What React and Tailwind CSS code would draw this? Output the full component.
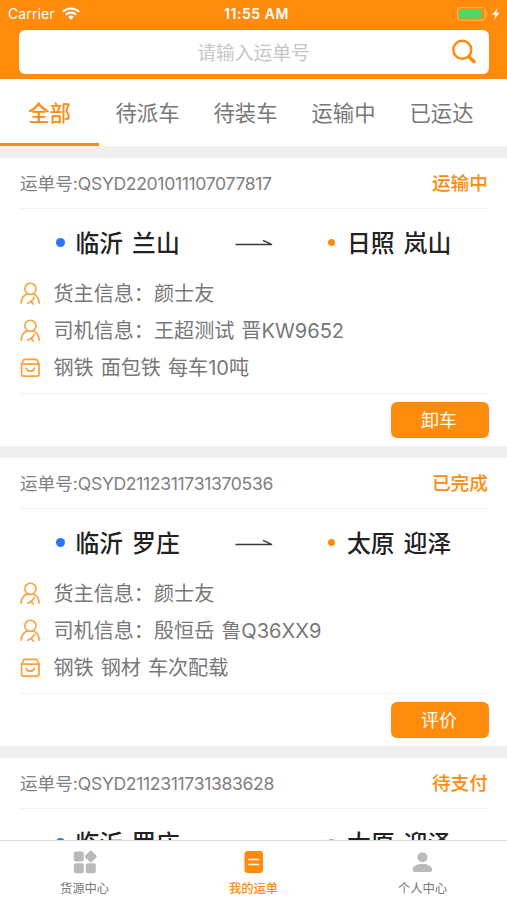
import React from "react";

const TABS = ["全部", "待派车", "待装车", "运输中", "已运达"];

const ORDERS = [
  {
    no: "QSYD2201011107077817",
    status: "运输中",
    from: ["临沂", "兰山"],
    to: ["日照", "岚山"],
    owner: "颜士友",
    driver: ["王超测试", "晋KW9652"],
    cargo: ["钢铁", "面包铁", "每车10吨"],
    action: "卸车",
  },
  {
    no: "QSYD2112311731370536",
    status: "已完成",
    from: ["临沂", "罗庄"],
    to: ["太原", "迎泽"],
    owner: "颜士友",
    driver: ["殷恒岳", "鲁Q36XX9"],
    cargo: ["钢铁", "钢材", "车次配载"],
    action: "评价",
  },
  {
    no: "QSYD2112311731383628",
    status: "待支付",
    from: ["临沂", "罗庄"],
    to: ["太原", "迎泽"],
  },
];

function WifiIcon() {
  return (
    <svg className="ml-[7px] h-[13px] w-[18px]" viewBox="0 0 18 13" fill="none" stroke="#fff" strokeWidth="2.2">
      <path d="M1 4.8a11.3 11.3 0 0 1 16 0" />
      <path d="M3.9 7.8a7.2 7.2 0 0 1 10.2 0" />
      <path d="M9 12.7L6.3 9.9a3.9 3.9 0 0 1 5.4 0z" fill="#fff" stroke="none" />
    </svg>
  );
}

function BatteryIcon() {
  return (
    <svg className="h-[14px] w-[44px]" viewBox="0 0 44 14" fill="none">
      <rect x="0.6" y="0.6" width="27.5" height="12.6" rx="3" stroke="#ffb765" strokeWidth="1" />
      <rect x="2" y="2.2" width="22.5" height="9.4" rx="1.2" fill="#4cd964" />
      <path d="M29.6 4.8c1.6.6 1.6 3.6 0 4.2z" fill="#ffb765" />
      <path d="M40.6 1L35.2 7.8h3.2L37 12.8l5.6-7h-3.3z" fill="#fff" />
    </svg>
  );
}

function SearchIcon() {
  return (
    <svg className="h-[26px] w-[26px]" viewBox="0 0 26 26" fill="none" stroke="#ff8b0d">
      <circle cx="11.3" cy="10.8" r="9" strokeWidth="2.5" />
      <path d="M18.2 18l4.8 4.6" strokeWidth="3.6" strokeLinecap="round" />
    </svg>
  );
}

function PersonIcon() {
  return (
    <svg className="h-[24px] w-[20px]" viewBox="0 0 20 24" fill="none" stroke="#ff9f3a" strokeWidth="1.6" strokeLinecap="round">
      <circle cx="10.4" cy="6.8" r="5.6" />
      <path d="M7.4 11.8C3.8 13.4 1.2 16.6 1.2 21.2" />
      <path d="M13.2 11.8c3.4 1.7 5.9 5 5.9 9.4" />
      <path d="M14.2 15.4c-1.2 2.8-3.6 5-6.6 5.8" />
      <path d="M11 19.2l2.5 3" />
    </svg>
  );
}

function CargoIcon() {
  return (
    <svg className="h-[20px] w-[20px]" viewBox="0 0 20 20" fill="none" stroke="#ff9f3a" strokeWidth="1.7" strokeLinecap="round" strokeLinejoin="round">
      <path d="M1.6 5.8L4 1.3h12.6L19 5.8v10.3a2 2 0 0 1-2 2H3.6a2 2 0 0 1-2-2z" />
      <path d="M1.6 6.2H19" />
      <path d="M6.2 10.2c1.1 4 7.1 4 8.2 0" />
    </svg>
  );
}

function RouteArrow() {
  return (
    <svg className="h-[8px] w-[38px]" viewBox="0 0 38 8" fill="none" stroke="#3a3a3a" strokeWidth="1.5">
      <path d="M0.5 5.6H37L28 1.4" strokeLinejoin="bevel" />
    </svg>
  );
}

function InfoRow({ icon, children }) {
  return (
    <div className="flex h-[37px] items-center text-[20.1px] text-[#777]">
      <span className="flex w-[33.5px] items-center">{icon}</span>
      <span className="flex pt-[2px]">{children}</span>
    </div>
  );
}

function Words({ items }) {
  return (
    <span className="flex gap-[7px]">
      {items.map((t) => (
        <span key={t}>{t}</span>
      ))}
    </span>
  );
}

function Place({ names, dot, className }) {
  return (
    <div className={`flex items-center ${className}`}>
      <span className={`rounded-full ${dot}`} />
      <span className="flex gap-[9px] pt-[2px] text-[23.8px] leading-normal font-medium text-[#222]">
        <span>{names[0]}</span>
        <span>{names[1]}</span>
      </span>
    </div>
  );
}

function OrderCard({ order }) {
  return (
    <article className="h-[288px] shrink-0 bg-white pr-[18px] pl-[20px]">
      <header className="flex h-[51px] items-center justify-between border-b border-[#f2f2f2] pt-[2px] pr-[1px]">
        <span className="text-[17.6px] text-[#808080]">
          运单号:<span className="tracking-[-0.35px]">{order.no}</span>
        </span>
        <span className="text-[18.7px] font-medium text-[#ff8b0d]">{order.status}</span>
      </header>
      <div className="flex h-[66px] items-center pt-px">
        <Place names={order.from} dot="ml-[36px] mr-[11px] size-[8.5px] bg-[#2e74fb]" className="w-[215px]" />
        <RouteArrow />
        <Place names={order.to} dot="mr-[12px] size-[7px] bg-[#ff8b0d]" className="ml-[55px]" />
      </div>
      {order.action && (
        <>
          <InfoRow icon={<PersonIcon />}>
            <span>货主信息：</span>
            <span>{order.owner}</span>
          </InfoRow>
          <InfoRow icon={<PersonIcon />}>
            <span>司机信息：</span>
            <Words items={order.driver} />
          </InfoRow>
          <InfoRow icon={<CargoIcon />}>
            <Words items={order.cargo} />
          </InfoRow>
          <footer className="mt-[7px] flex justify-end border-t border-[#f2f2f2] pt-[8px]">
            <button className="h-[36px] w-[98px] rounded-[6px] bg-[#ff8b0d] pt-[2px] pr-[2px] text-[18px] text-white">{order.action}</button>
          </footer>
        </>
      )}
    </article>
  );
}

function GridIcon() {
  return (
    <svg className="h-[24px] w-[24px]" viewBox="0 0 24 24" fill="#bababa">
      <rect x="0.8" y="1.6" width="10" height="10" rx="2" />
      <rect x="13.2" y="1.8" width="9.2" height="9.2" rx="1.4" transform="rotate(45 17.8 6.4)" />
      <rect x="0.8" y="13.2" width="10" height="10" rx="2" />
      <rect x="12.8" y="13.2" width="10" height="10" rx="2" />
    </svg>
  );
}

function WaybillIcon() {
  return (
    <svg className="h-[24px] w-[24px]" viewBox="0 0 24 24">
      <rect x="2.5" y="1" width="18.5" height="22" rx="3.2" fill="#ff8b0d" />
      <path d="M6.2 9.5h11M6.2 14.5h11" stroke="#fff" strokeWidth="1.5" />
    </svg>
  );
}

function ProfileIcon() {
  return (
    <svg className="h-[24px] w-[24px]" viewBox="0 0 24 24" fill="#bababa">
      <circle cx="11.4" cy="7.3" r="5" />
      <path d="M1.6 19.6c0-3.6 4.6-5.6 9.8-5.6s9.8 2 9.8 5.6c0 1.6-.8 2.4-2.2 2.4H3.8c-1.4 0-2.2-.8-2.2-2.4z" />
    </svg>
  );
}

const NAV = [
  { label: "货源中心", icon: <GridIcon />, color: "text-[#777]" },
  { label: "我的运单", icon: <WaybillIcon />, color: "text-[#ff8b0d] font-medium" },
  { label: "个人中心", icon: <ProfileIcon />, color: "text-[#777]" },
];

export default function App() {
  return (
    <div className="flex h-[900px] w-[507px] flex-col overflow-hidden bg-[#efeff0] font-[Inter,'Noto_Sans_CJK_SC',sans-serif] leading-none whitespace-nowrap">
      <div className="h-[79px] shrink-0 bg-[#ff8b0d]">
        <div className="flex h-[30px] items-center pr-[6px] pb-[3px] pl-[8px] text-[14px] text-white">
          <div className="flex w-[216px] items-center">
            <span className="tracking-[0.1px]">Carrier</span>
            <WifiIcon />
          </div>
          <span className="flex-1 font-semibold tracking-[0.55px]">11:55 AM</span>
          <BatteryIcon />
        </div>
        <div className="mr-[18px] ml-[19px] flex h-[44px] items-center rounded-[6px] bg-white">
          <span className="flex-1 pt-[5px] pl-[37px] text-center text-[18.8px] text-[#c6c6c6]">请输入运单号</span>
          <span className="mr-[12px]"><SearchIcon /></span>
        </div>
      </div>
      <nav className="flex h-[68px] shrink-0 border-b border-[#f4f4f4] bg-white">
        {TABS.map((t, i) => (
          <div
            key={t}
            className={
              i === 0
                ? "flex w-[99px] items-center justify-center border-b-[3px] border-[#ff8b0d] pt-[5px] text-[21.3px] font-medium text-[#ff8b0d]"
                : "flex w-[98px] items-center justify-center border-b-[3px] border-transparent pt-[5px] pr-[1px] text-[21.3px] text-[#777]"
            }
          >
            {t}
          </div>
        ))}
      </nav>
      <main className="mt-[11px] flex min-h-0 flex-1 flex-col gap-[12px] overflow-hidden">
        {ORDERS.map((o) => <OrderCard key={o.no} order={o} />)}
      </main>
      <footer className="flex h-[60px] shrink-0 border-t border-[#d9d9d9] bg-white">
        {NAV.map((n) => (
          <div key={n.label} className={`flex flex-1 flex-col items-center pt-[9px] text-[12.3px] ${n.color}`}>
            {n.icon}
            <span className="mt-[6px] leading-[18px]">{n.label}</span>
          </div>
        ))}
      </footer>
    </div>
  );
}
